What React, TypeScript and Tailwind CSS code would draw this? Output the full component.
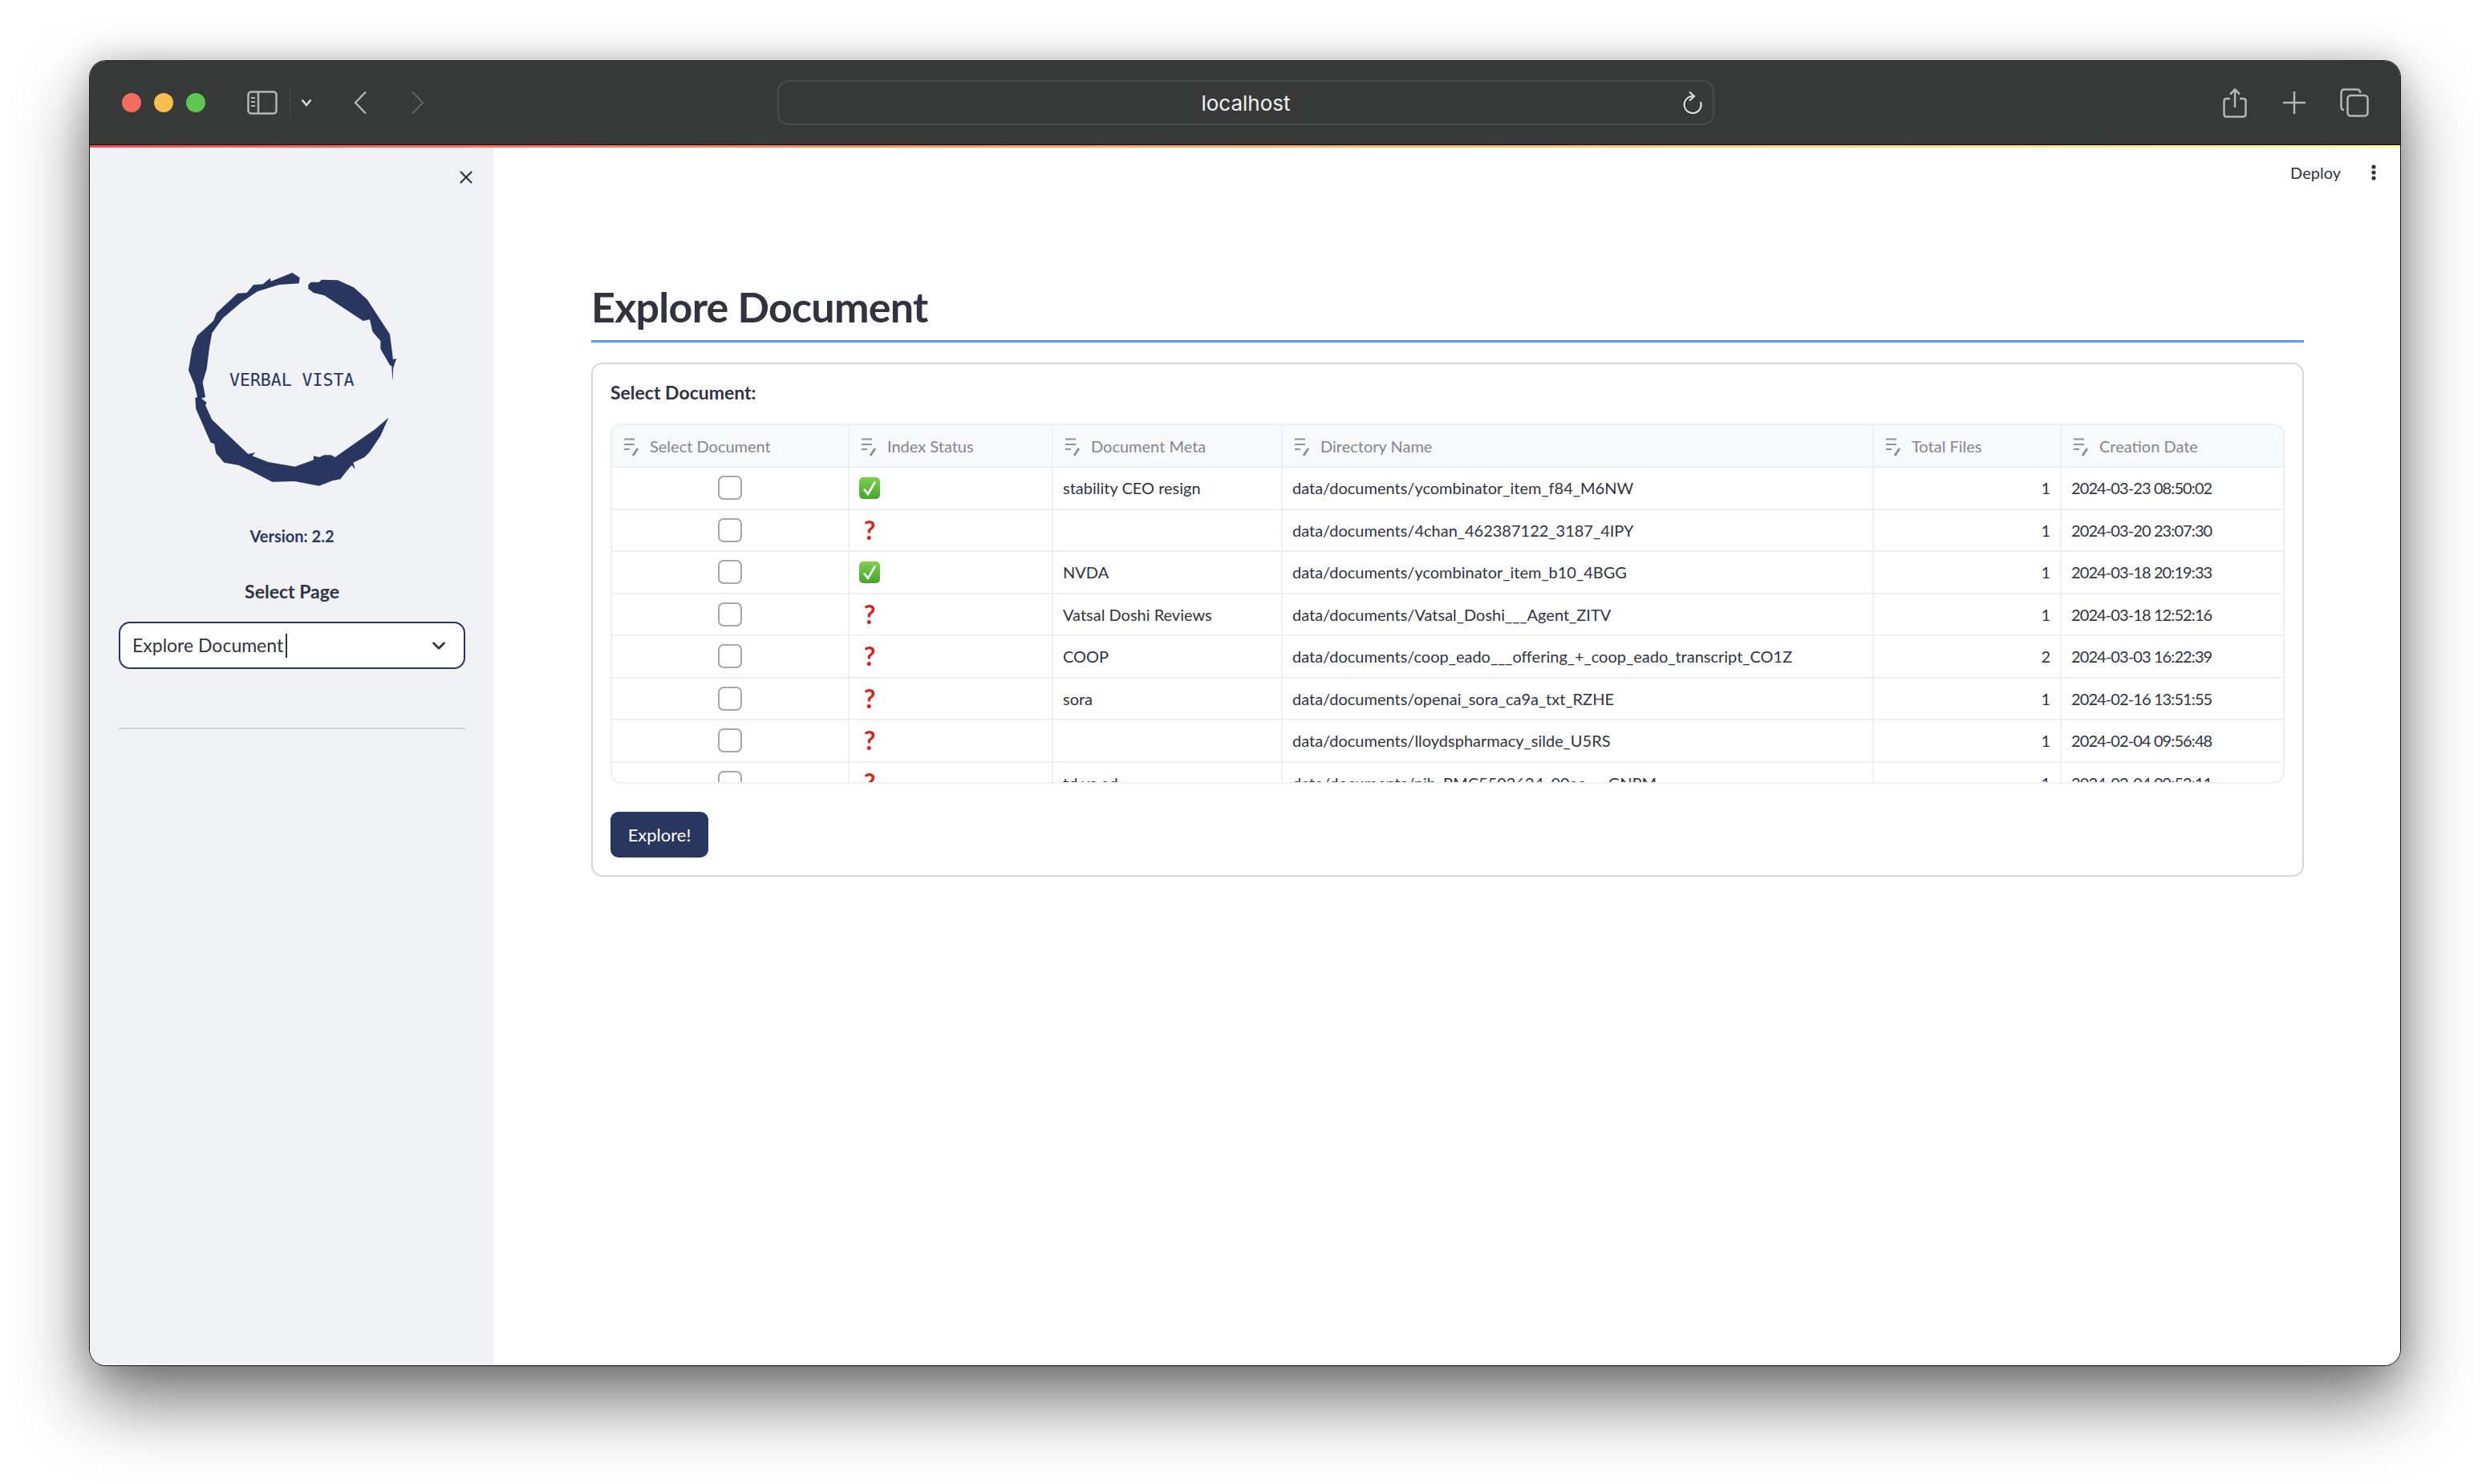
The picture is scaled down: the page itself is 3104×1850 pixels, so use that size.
import { X, ChevronDown } from 'lucide-react';

type Row = { indexed: boolean; meta: string; dir: string; files: number; date: string };

const rows: Row[] = [
  { indexed: true, meta: 'stability CEO resign', dir: 'data/documents/ycombinator_item_f84_M6NW', files: 1, date: '2024-03-23 08:50:02' },
  { indexed: false, meta: '', dir: 'data/documents/4chan_462387122_3187_4IPY', files: 1, date: '2024-03-20 23:07:30' },
  { indexed: true, meta: 'NVDA', dir: 'data/documents/ycombinator_item_b10_4BGG', files: 1, date: '2024-03-18 20:19:33' },
  { indexed: false, meta: 'Vatsal Doshi Reviews', dir: 'data/documents/Vatsal_Doshi___Agent_ZITV', files: 1, date: '2024-03-18 12:52:16' },
  { indexed: false, meta: 'COOP', dir: 'data/documents/coop_eado___offering_+_coop_eado_transcript_CO1Z', files: 2, date: '2024-03-03 16:22:39' },
  { indexed: false, meta: 'sora', dir: 'data/documents/openai_sora_ca9a_txt_RZHE', files: 1, date: '2024-02-16 13:51:55' },
  { indexed: false, meta: '', dir: 'data/documents/lloydspharmacy_silde_U5RS', files: 1, date: '2024-02-04 09:56:48' },
  { indexed: false, meta: 'td vs ed', dir: 'data/documents/nih_PMC5502624_00ae___GNPM', files: 1, date: '2024-02-04 09:53:11' },
];

const headers = ['Select Document', 'Index Status', 'Document Meta', 'Directory Name', 'Total Files', 'Creation Date'];

const gridCols = 'grid grid-cols-[296px_254px_286px_737px_234px_276px]';

function HeaderIcon() {
  return (
    <svg width="20" height="26" viewBox="0 0 20 26" fill="none" className="shrink-0">
      <path d="M1 4.5H14M1 11H14M1 17H8" stroke="#8f9299" strokeWidth="2" />
      <path d="M12 25L18 16" stroke="#8f9299" strokeWidth="3" />
    </svg>
  );
}

function CheckEmoji() {
  return (
    <svg width="26" height="27" viewBox="0 0 26 27">
      <defs>
        <linearGradient id="emojiGreen" x1="0" y1="0" x2="0" y2="1">
          <stop offset="0" stopColor="#7fd04e" />
          <stop offset="1" stopColor="#45a52c" />
        </linearGradient>
      </defs>
      <rect x="0" y="0" width="26" height="27" rx="5" fill="url(#emojiGreen)" />
      <path d="M6 14.5L11 21L20 5.5" fill="none" stroke="#fff" strokeWidth="2.6" />
    </svg>
  );
}

function Logo() {
  return (
    <div className="relative ml-[53px] h-[300px] w-[330px]">
      <svg width="330" height="300" viewBox="0 0 990 900">
        <path
          fill="#283660"
          d="M490 60L440 80L410 92L407 80L380 103L345 105L320 135L285 137L207 210L195 240L135 295L115 345L102 425L125 480L135 525L127 528L130 570L185 695L198 700L205 735L235 770L290 780L330 798L415 842L500 840L590 857L640 838L670 832L695 800L712 780L725 795L718 770L760 750L780 730L820 670L850 602L800 645L650 750L635 742L610 742L590 750L570 745L570 760L500 785L400 768L340 745L352 732L325 738L190 610L165 555L170 545L150 530L165 525L155 470L170 420L180 340L190 285L230 230L300 170L360 130L440 105L515 100L518 78L505 70Z"
        />
        <path
          fill="#283660"
          d="M550 105L560 95L590 95L600 86L660 88L720 115L770 160L855 290L867 385L880 380L868 415L865 465L862 410L855 405L820 345L820 315L790 280L780 235L755 240L610 145L570 135L550 120Z"
        />
      </svg>
      <span className="absolute left-[85px] top-[139px] font-['DejaVu_Sans_Mono',monospace] text-[21.5px] leading-[30px] text-[#283660]">
        VERBAL VISTA
      </span>
    </div>
  );
}

function Sidebar() {
  return (
    <aside className="flex w-[503px] shrink-0 flex-col bg-[#f0f2f6] pl-[36px] pr-[35px]">
      <div className="flex h-[136px] justify-end pt-[24px]">
        <X className="mr-[-14px] h-[26px] w-[26px] text-[#31333f]" strokeWidth={2} />
      </div>
      <Logo />
      <p className="mt-[33px] text-center text-[20px] font-bold leading-[30px] text-[#283660]">Version: 2.2</p>
      <p className="mt-[37px] text-center text-[23px] font-bold leading-[34px] text-[#31333f]">Select Page</p>
      <div className="mt-[21px] flex h-[59px] items-center justify-between rounded-[14px] border-2 border-[#283660] bg-white pl-[15px] pr-[18px]">
        <div className="flex items-center text-[23px] text-[#31333f]">
          Explore Document
          <span className="ml-[3px] h-[30px] w-[2px] bg-[#31333f]" />
        </div>
        <ChevronDown className="h-[26px] w-[26px] text-[#31333f]" strokeWidth={2.5} />
      </div>
      <div className="mt-[73px] h-[2px] bg-[#cfd0d5]" />
    </aside>
  );
}

function DocumentTable() {
  return (
    <div className="h-[449px] overflow-hidden rounded-[14px] border-2 border-[#eeeff1]">
      <div className={`${gridCols} h-[53px] border-b-2 border-[#eeeff1] bg-[#f8f9fb]`}>
        {headers.map((h, i) => (
          <div key={h} className={`flex items-center gap-[13px] pl-[14px] text-[20px] text-[#83868e] ${i < 5 ? 'border-r-2 border-[#eeeff1]' : ''}`}>
            <HeaderIcon />
            {h}
          </div>
        ))}
      </div>
      {rows.map(r => (
        <div key={r.date} className={`${gridCols} h-[52.5px] border-b-2 border-[#eeeff1] text-[20px] text-[#31333f]`}>
          <div className="flex items-center justify-center border-r-2 border-[#eeeff1] pr-[1px]">
            <span className="h-[30px] w-[30px] rounded-[7px] border-2 border-[#a6a7ac] bg-white" />
          </div>
          <div className="flex items-center border-r-2 border-[#eeeff1] pl-[12px]">
            {r.indexed ? (
              <CheckEmoji />
            ) : (
              <span className="w-[26px] text-center text-[32px] font-bold leading-none text-[#cb2a1f]">?</span>
            )}
          </div>
          <div className="flex items-center border-r-2 border-[#eeeff1] pl-[12px]">{r.meta}</div>
          <div className="flex items-center border-r-2 border-[#eeeff1] pl-[12px]">{r.dir}</div>
          <div className="flex items-center justify-end border-r-2 border-[#eeeff1] pr-[12px]">{r.files}</div>
          <div className="flex items-center pl-[12px] tracking-[-0.9px]">{r.date}</div>
        </div>
      ))}
    </div>
  );
}

function MainArea() {
  return (
    <main className="flex-1 bg-white pl-[122px] pr-[121px]">
      <div className="mr-[-121px] flex h-[62px] items-center justify-end gap-[38px] pr-[31px] text-[20px] text-[#31333f]">
        <span>Deploy</span>
        <svg width="6" height="20" viewBox="0 0 6 20" fill="#31333f">
          <circle cx="3" cy="3" r="2.6" />
          <circle cx="3" cy="10" r="2.6" />
          <circle cx="3" cy="17" r="2.6" />
        </svg>
      </div>
      <h1 className="mt-[89px] flex h-[92px] items-end border-b-[3px] border-[#5c9cf0] pb-[7px] text-[52px] font-bold leading-[70px] tracking-[-0.75px] text-[#31333f]">
        Explore Document
      </h1>
      <section className="mt-[25px] h-[641px] rounded-[14px] border-2 border-[#d6d7d9] px-[22px] pt-[17px]">
        <p className="h-[36px] text-[23px] font-bold leading-[36px] text-[#31333f]">Select Document:</p>
        <div className="mt-[21px]">
          <DocumentTable />
        </div>
        <button className="mt-[35px] h-[57px] w-[122px] rounded-[10px] bg-[#283660] text-[22px] text-white">Explore!</button>
      </section>
    </main>
  );
}

function BrowserBar() {
  return (
    <header className="flex h-[104px] shrink-0 items-center bg-[#373938] pl-[40px]">
      <div className="flex gap-[16px]">
        <span className="h-[24px] w-[24px] rounded-full bg-[#f26d60]" />
        <span className="h-[24px] w-[24px] rounded-full bg-[#f6bd4f]" />
        <span className="h-[24px] w-[24px] rounded-full bg-[#61c554]" />
      </div>
      <svg className="ml-[52px]" width="38" height="30" viewBox="0 0 38 30" fill="none" stroke="#b5b6b5" strokeWidth="2.5">
        <rect x="1.5" y="1.5" width="35" height="27" rx="3.5" />
        <path d="M14 1.5V28.5" />
        <path d="M5 9H10M5 14H10M5 19H10" strokeWidth="2" />
      </svg>
      <span className="ml-[15px] h-[36px] w-px bg-[#4d4f4e]" />
      <svg className="ml-[13px]" width="14" height="10" viewBox="0 0 14 10" fill="none" stroke="#d5d6d5" strokeWidth="2.6">
        <path d="M1.5 1.5L7 8L12.5 1.5" />
      </svg>
      <svg className="ml-[51px]" width="18" height="30" viewBox="0 0 18 30" fill="none" stroke="#b5b6b5" strokeWidth="2.4">
        <path d="M16 1.5L3 15L16 28.5" />
      </svg>
      <svg className="ml-[54px]" width="18" height="30" viewBox="0 0 18 30" fill="none" stroke="#5e605f" strokeWidth="2.4">
        <path d="M2 1.5L15 15L2 28.5" />
      </svg>
      <div className="relative ml-[439px] flex h-[56px] w-[1168px] items-center justify-center rounded-[14px] border-2 border-[#4a4c4b] text-[26px] text-[#f2f2f2] font-['Inter',sans-serif]">
        localhost
        <svg className="absolute right-[12px] top-[11px]" width="26" height="32" viewBox="0 0 26 32" fill="none" stroke="#e4e4e4" strokeWidth="2">
          <path d="M13 7A10.5 10.5 0 1 0 23 14" />
          <path d="M9 1.5L15 7L9 12.5" />
        </svg>
      </div>
      <svg className="ml-[634px]" width="30" height="37" viewBox="0 0 30 37" fill="none" stroke="#b5b6b5" strokeWidth="2.5">
        <path d="M9 13H4.5Q1.5 13 1.5 16V32Q1.5 35.5 4.5 35.5H25.5Q28.5 35.5 28.5 32V16Q28.5 13 25.5 13H21" />
        <path d="M15 24V2M9 7.5L15 1.5L21 7.5" />
      </svg>
      <svg className="ml-[44px]" width="30" height="30" viewBox="0 0 30 30" fill="none" stroke="#b5b6b5" strokeWidth="2.5">
        <path d="M15 1V29M1 15H29" />
      </svg>
      <svg className="ml-[42px]" width="36" height="36" viewBox="0 0 36 36" fill="none" stroke="#b5b6b5" strokeWidth="2.5">
        <path d="M5 27Q1.5 27 1.5 23V6Q1.5 1.5 6 1.5H21Q25 1.5 25.5 6" />
        <rect x="9.5" y="9" width="25" height="25.5" rx="4" />
      </svg>
    </header>
  );
}

export default function App() {
  return (
    <div className="h-[1850px] w-[3104px] overflow-hidden bg-white pl-[112px] pt-[76px] font-[Lato,sans-serif]">
      <div className="flex h-[1626px] w-[2880px] flex-col overflow-hidden rounded-[20px] shadow-[0_0_0_1px_rgba(0,0,0,0.85),0_44px_90px_rgba(0,0,0,0.55),0_0_40px_rgba(0,0,0,0.2)]">
        <BrowserBar />
        <div className="h-px shrink-0 bg-black" />
        <div className="h-[3px] shrink-0 bg-gradient-to-r from-[#ff4b4b] to-[#fffd80]" />
        <div className="flex flex-1">
          <Sidebar />
          <MainArea />
        </div>
      </div>
    </div>
  );
}
